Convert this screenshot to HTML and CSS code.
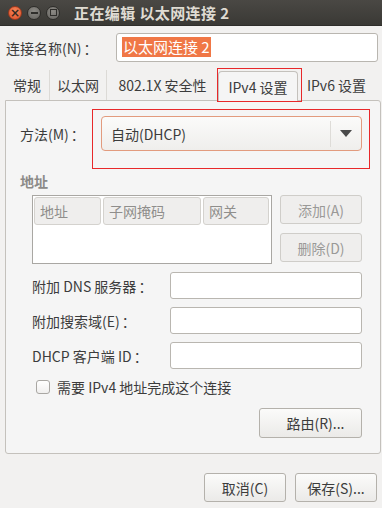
FILE: index.html
```html
<html lang="zh-CN">
<head>
<title>正在编辑 以太网连接 2</title>
<link rel="stylesheet" href="styles.css">
</head>
<body>
<div id="window">
	<div class="titlebar">
		<span class="wbtn close">&times;</span>
		<span class="wbtn mini"><i class="bar"></i></span>
		<span class="wbtn maxi"><i class="sq"></i></span>
		<span class="title">正在编辑 以太网连接 2</span>
	</div>
	<div class="content">
		<div class="name_row">
			<div class="name_label">连接名称(N)<span class="colon">：</span></div>
			<div class="entry name_entry"><span class="selected">以太网连接 2</span></div>
		</div>
		<div class="tabs">
			<div class="tab sep t1">常规</div>
			<div class="tab sep t2">以太网</div>
			<div class="tab t3">802.1X 安全性</div>
			<div class="tab active">IPv4 设置<span class="mark mark_tab"></span></div>
			<div class="tab t5">IPv6 设置</div>
		</div>
		<div class="panel">
			<div class="method_row">
				<div class="method_label">方法(M)<span class="colon">：</span></div>
				<div class="combo">
					<span class="combo_text">自动(DHCP)</span>
					<span class="combo_sep"></span>
					<span class="arrow"></span>
				</div>
				<span class="mark mark_combo"></span>
			</div>
			<div class="heading">地址</div>
			<div class="addr_row">
				<div class="addr_table">
					<div class="addr_head">
						<div class="col c1">地址</div>
						<div class="col c2">子网掩码</div>
						<div class="col c3">网关</div>
					</div>
				</div>
				<div class="addr_btns">
					<div class="button off">添加(A)</div>
					<div class="button off">删除(D)</div>
				</div>
			</div>
			<div class="field">
				<div class="field_label">附加 DNS 服务器<span class="colon">：</span></div>
				<div class="entry field_entry"></div>
			</div>
			<div class="field">
				<div class="field_label">附加搜索域(E)<span class="colon">：</span></div>
				<div class="entry field_entry"></div>
			</div>
			<div class="field">
				<div class="field_label">DHCP 客户端 ID<span class="colon">：</span></div>
				<div class="entry field_entry"></div>
			</div>
			<div class="check_row">
				<span class="checkbox"></span>
				<span>需要 IPv4 地址完成这个连接</span>
			</div>
			<div class="route_row">
				<div class="button route">路由(R)...</div>
			</div>
		</div>
		<div class="dialog_btns">
			<div class="button dlg">取消(C)</div>
			<div class="button dlg">保存(S)...</div>
		</div>
	</div>
</div>
</body>
</html>
```

FILE: styles.css
```css
	body{
		margin:0;
		font-family:"Noto Sans CJK SC", "Noto Sans", sans-serif;
		font-size:14px;
		color:#3c3c3c;
		background:#f2f1f0;
	}
	#window{
		width:382px;
		height:508px;
		background:#f2f1f0;
		overflow:hidden;
	}
	.colon{
		display:inline-block;
		width:18px;
		text-align:center;
	}
	.titlebar{
		height:26px;
		display:flex;
		align-items:center;
		padding-left:8px;
		background:linear-gradient(#4a4844, #3a3935);
		border-bottom:1px solid #2f2e2b;
		box-sizing:border-box;
	}
	.wbtn{
		width:14px;
		height:14px;
		border-radius:50%;
		margin-right:5px;
		display:flex;
		align-items:center;
		justify-content:center;
		box-sizing:border-box;
	}
	.close{
		background:radial-gradient(circle at 50% 35%, #f7875a, #e0502a);
		border:1px solid #9c3a1e;
		color:#3a2a20;
		font-size:12px;
		line-height:12px;
		font-family:"DejaVu Sans", sans-serif;
		font-weight:bold;
	}
	.mini, .maxi{
		background:radial-gradient(circle at 50% 35%, #8c8a85, #65635f);
		border:1px solid #2e2d2a;
	}
	.bar{
		width:7px;
		height:2px;
		background:#2f2e2b;
	}
	.sq{
		width:5px;
		height:5px;
		border:1px solid #2f2e2b;
	}
	.title{
		margin-left:9px;
		color:#dfdbd2;
		font-weight:bold;
		font-size:15px;
		letter-spacing:0.4px;
	}
	.content{
		padding:0 1px 0 5px;
	}
	.name_row{
		display:flex;
		align-items:center;
		margin-top:7px;
		height:29px;
	}
	.name_label{
		width:110px;
		padding-left:1px;
	}
	.entry{
		background:#fff;
		border:1px solid #b9b6b0;
		border-radius:3px;
		box-sizing:border-box;
	}
	.name_entry{
		flex:1;
		height:29px;
		padding:3px 0 0 5px;
		margin-right:3px;
	}
	.selected{
		background:#f07746;
		color:#fff;
		display:inline-block;
		line-height:20px;
		padding:0 1px;
		font-size:15px;
	}
	.tabs{
		display:flex;
		align-items:stretch;
		height:31px;
		margin-top:8px;
		position:relative;
		z-index:1;
	}
	.tab{
		display:flex;
		align-items:center;
		justify-content:center;
		height:30px;
		box-sizing:border-box;
	}
	.tab.sep{
		border-right:1px solid #dcdad6;
	}
	.t1{ width:45px; }
	.t2{ width:57px; }
	.t3{ width:111px; }
	.t5{ width:77px; }
	.tab.active{
		width:80px;
		height:30px;
		margin-top:1px;
		background:#f5f5f5;
		border:1px solid #c4c1bc;
		border-bottom:none;
		border-radius:4px 4px 0 0;
		position:relative;
	}
	.mark{
		position:absolute;
		border:1px solid #e8282a;
		pointer-events:none;
	}
	.mark_tab{
		left:-2px;
		top:-4px;
		right:-5px;
		bottom:-1px;
	}
	.panel{
		height:354px;
		margin-top:-1px;
		background:#f5f5f5;
		border:1px solid #c4c1bc;
		border-radius:0 3px 3px 3px;
		box-sizing:border-box;
		padding:15px 18px 0 14px;
	}
	.method_row{
		display:flex;
		align-items:center;
		position:relative;
	}
	.method_label{
		width:81px;
	}
	.combo{
		flex:1;
		height:35px;
		display:flex;
		align-items:center;
		border:1px solid #e29b7e;
		border-radius:4px;
		background:linear-gradient(#fbfbfa, #efeeec);
		box-sizing:border-box;
		padding-left:9px;
	}
	.combo_text{
		flex:1;
	}
	.combo_sep{
		width:1px;
		height:26px;
		background:#dedcd8;
		margin-right:9px;
	}
	.arrow{
		width:0;
		height:0;
		border-left:6px solid transparent;
		border-right:6px solid transparent;
		border-top:7px solid #4a4a4a;
		margin-right:9px;
	}
	.mark_combo{
		left:72px;
		top:-7px;
		right:-8px;
		height:58px;
	}
	.heading{
		margin-top:20px;
		color:#8b8a88;
		font-weight:bold;
		line-height:20px;
	}
	.addr_row{
		display:flex;
		margin-top:4px;
		margin-left:12px;
	}
	.addr_table{
		width:241px;
		height:69px;
		background:#fff;
		border:1px solid #a9a7a3;
		box-sizing:border-box;
		padding:1px;
	}
	.addr_head{
		display:flex;
	}
	.col{
		height:28px;
		box-sizing:border-box;
		border:1px solid #d4d2ce;
		border-radius:3px;
		background:#efeeed;
		color:#8f8e8c;
		padding-left:5px;
		display:flex;
		align-items:center;
		margin-right:2px;
	}
	.c1{ width:67px; }
	.c2{ width:98px; }
	.c3{ width:66px; margin-right:0; }
	.addr_btns{
		margin-left:8px;
		display:flex;
		flex-direction:column;
		gap:9px;
	}
	.button{
		display:flex;
		align-items:center;
		justify-content:center;
		border:1px solid #b4b1ab;
		border-radius:3px;
		background:linear-gradient(#fbfbfa, #ebeae8);
		box-sizing:border-box;
	}
	.button.off{
		width:82px;
		height:29px;
		background:#efeeed;
		border-color:#cfcdc9;
		color:#9a9997;
	}
	.field{
		display:flex;
		align-items:center;
		margin-top:8px;
		margin-left:12px;
	}
	.field_label{
		width:138px;
	}
	.field_entry{
		width:193px;
		height:27px;
	}
	.check_row{
		display:flex;
		align-items:center;
		margin-top:8px;
		margin-left:16px;
		gap:7px;
	}
	.checkbox{
		width:14px;
		height:14px;
		border:1px solid #a9a7a3;
		border-radius:3px;
		background:linear-gradient(#ffffff, #f0efee);
		box-sizing:border-box;
	}
	.route_row{
		display:flex;
		justify-content:flex-end;
		margin-top:11px;
	}
	.button.route{
		width:103px;
		height:30px;
		padding-left:10px;
	}
	.dialog_btns{
		display:flex;
		justify-content:flex-end;
		gap:9px;
		margin-top:19px;
		padding-right:4px;
	}
	.button.dlg{
		width:82px;
		height:29px;
	}
```
